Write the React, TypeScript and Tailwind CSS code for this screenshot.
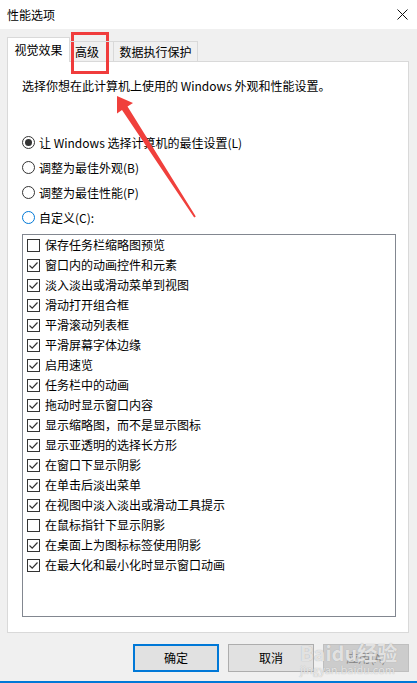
import { useState } from 'react'

const options = [
  { label: '保存任务栏缩略图预览', on: false },
  { label: '窗口内的动画控件和元素', on: true },
  { label: '淡入淡出或滑动菜单到视图', on: true },
  { label: '滑动打开组合框', on: true },
  { label: '平滑滚动列表框', on: true },
  { label: '平滑屏幕字体边缘', on: true },
  { label: '启用速览', on: true },
  { label: '任务栏中的动画', on: true },
  { label: '拖动时显示窗口内容', on: true },
  { label: '显示缩略图，而不是显示图标', on: true },
  { label: '显示亚透明的选择长方形', on: true },
  { label: '在窗口下显示阴影', on: true },
  { label: '在单击后淡出菜单', on: true },
  { label: '在视图中淡入淡出或滑动工具提示', on: true },
  { label: '在鼠标指针下显示阴影', on: false },
  { label: '在桌面上为图标标签使用阴影', on: true },
  { label: '在最大化和最小化时显示窗口动画', on: true },
]

const radios = [
  '让 Windows 选择计算机的最佳设置(L)',
  '调整为最佳外观(B)',
  '调整为最佳性能(P)',
  '自定义(C):',
]

function Radio({ checked, focus }: { checked: boolean; focus?: boolean }) {
  return (
    <span
      className={`flex h-[13px] w-[13px] items-center justify-center rounded-full border bg-white ${
        focus ? 'border-[#0078d7]' : 'border-[#333333]'
      }`}
    >
      {checked && <span className="h-[7px] w-[7px] rounded-full bg-[#333333]" />}
    </span>
  )
}

function Checkbox({ checked }: { checked: boolean }) {
  return (
    <span className="flex h-[13px] w-[13px] items-center justify-center border border-[#333333] bg-white">
      {checked && (
        <svg width="11" height="11" viewBox="0 0 11 11">
          <path d="M1.5 5.5 L4.2 8.2 L9.5 2.5" fill="none" stroke="#333333" strokeWidth="1.2" />
        </svg>
      )}
    </span>
  )
}

export default function App() {
  const [items, setItems] = useState(options)
  const [mode, setMode] = useState(0)

  return (
    <div className="relative flex h-[683px] w-[417px] flex-col overflow-hidden bg-[#f0f0f0] font-['Microsoft_YaHei_UI','Noto_Sans_CJK_SC',sans-serif] text-[12px] leading-[20px] text-black">
      {/* title bar */}
      <div className="flex h-[29px] items-center justify-between bg-white pl-[7px] pr-[9px]">
        <span>性能选项</span>
        <svg width="11" height="11" viewBox="0 0 11 11">
          <path d="M0.5 0.5 L10.5 10.5 M10.5 0.5 L0.5 10.5" stroke="#111111" strokeWidth="1" />
        </svg>
      </div>

      <div className="flex flex-1 flex-col pl-[7px] pr-[8px] pt-[8px]">
        {/* tabs */}
        <div className="relative z-10 -mb-px flex items-start">
          <div className="flex h-[25px] w-[63px] items-center justify-center border border-b-0 border-[#d9d9d9] bg-white">
            视觉效果
          </div>
          <div className="mt-[4px] flex h-[20px] w-[44px] items-center border border-b-0 border-l-0 border-[#d9d9d9] pl-[5px]">
            高级
          </div>
          <div className="mt-[4px] flex h-[20px] w-[84px] items-center justify-center border border-b-0 border-l-0 border-[#d9d9d9]">
            数据执行保护
          </div>
        </div>

        {/* panel */}
        <div className="flex h-[572px] flex-col border border-[#d9d9d9] bg-white pl-[14px] pr-[12px] pt-[14px]">
          <p>选择你想在此计算机上使用的 Windows 外观和性能设置。</p>

          <div className="mt-[34px] flex flex-col">
            {radios.map((r, i) => (
              <button
                key={r}
                onClick={() => setMode(i)}
                className="flex h-[25px] items-center gap-[4px] text-left"
              >
                <Radio checked={mode === i} focus={i === 3} />
                <span>{r}</span>
              </button>
            ))}
          </div>

          <div className="mt-[4px] flex h-[383px] flex-col border border-[#828790] pl-[4px]">
            {items.map((it, i) => (
              <button
                key={it.label}
                onClick={() =>
                  setItems(items.map((x, j) => (j === i ? { ...x, on: !x.on } : x)))
                }
                className="flex h-[20px] items-center gap-[5px] text-left"
              >
                <Checkbox checked={it.on} />
                <span>{it.label}</span>
              </button>
            ))}
          </div>
        </div>

        {/* buttons */}
        <div className="mt-[11px] flex justify-end gap-[9px]">
          <button className="h-[28px] w-[86px] border-2 border-[#0078d7] bg-[#e1e1e1]">确定</button>
          <button className="h-[28px] w-[86px] border border-[#adadad] bg-[#e1e1e1]">取消</button>
          <button className="h-[28px] w-[86px] border border-[#bfbfbf] bg-[#cccccc] text-[#838383]">
            应用(A)
          </button>
        </div>
        <div className="flex-1" />
      </div>
      <div className="h-[2px] bg-[#0078d7]" />

      {/* annotation: red box over the tab */}
      <div className="pointer-events-none absolute left-[71px] top-[32px] h-[42px] w-[38px] border-[3px] border-[#f03c3c]" />

      {/* annotation: red arrow */}
      <svg className="pointer-events-none absolute left-0 top-0" width="417" height="683">
        <polygon
          points="117,96 133,103 127.5,106.5 195.8,216.6 194.2,217.6 122,110 117,113.5"
          fill="#f0403c"
        />
      </svg>

      {/* watermark */}
      <div className="pointer-events-none absolute left-[300px] top-[643px] flex flex-col items-start whitespace-nowrap leading-none text-white/70 [text-shadow:0_0_1px_#a0a0a0]">
        <span className="text-[20px] font-bold">Baidu经验</span>
        <span className="mt-[1px] text-[11px]">jingyan.baidu.com</span>
      </div>
    </div>
  )
}
